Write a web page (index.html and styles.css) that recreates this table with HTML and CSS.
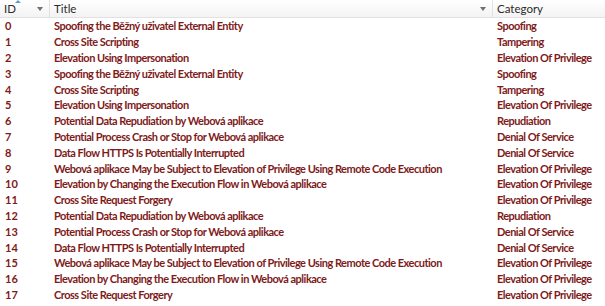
FILE: index.html
```html
<!DOCTYPE html>
<html lang="en">
<head>
  <meta charset="UTF-8" />
  <title>Threat List</title>
  <link rel="stylesheet" href="styles.css">
</head>
<body>
  <div class="grid">
    <div class="head">
      <div class="hcell id-col">
        <span class="sort-arrow"></span>
        ID
        <span class="filter-arrow"></span>
      </div>
      <div class="hcell title-col">
        Title
        <span class="filter-arrow"></span>
      </div>
      <div class="hcell cat-col">Category</div>
    </div>

    <div class="rows" id="rows"></div>
  </div>

  <script>
    const threats = [
      ["0", "Spoofing the Běžný uživatel External Entity", "Spoofing"],
      ["1", "Cross Site Scripting", "Tampering"],
      ["2", "Elevation Using Impersonation", "Elevation Of Privilege"],
      ["3", "Spoofing the Běžný uživatel External Entity", "Spoofing"],
      ["4", "Cross Site Scripting", "Tampering"],
      ["5", "Elevation Using Impersonation", "Elevation Of Privilege"],
      ["6", "Potential Data Repudiation by Webová aplikace", "Repudiation"],
      ["7", "Potential Process Crash or Stop for Webová aplikace", "Denial Of Service"],
      ["8", "Data Flow HTTPS Is Potentially Interrupted", "Denial Of Service"],
      ["9", "Webová aplikace May be Subject to Elevation of Privilege Using Remote Code Execution", "Elevation Of Privilege"],
      ["10", "Elevation by Changing the Execution Flow in Webová aplikace", "Elevation Of Privilege"],
      ["11", "Cross Site Request Forgery", "Elevation Of Privilege"],
      ["12", "Potential Data Repudiation by Webová aplikace", "Repudiation"],
      ["13", "Potential Process Crash or Stop for Webová aplikace", "Denial Of Service"],
      ["14", "Data Flow HTTPS Is Potentially Interrupted", "Denial Of Service"],
      ["15", "Webová aplikace May be Subject to Elevation of Privilege Using Remote Code Execution", "Elevation Of Privilege"],
      ["16", "Elevation by Changing the Execution Flow in Webová aplikace", "Elevation Of Privilege"],
      ["17", "Cross Site Request Forgery", "Elevation Of Privilege"]
    ];

    const rows = document.getElementById('rows');
    threats.forEach(t => {
      const row = document.createElement('div');
      row.className = 'row';
      row.innerHTML =
        '<div class="cell id-col">' + t[0] + '</div>' +
        '<div class="cell title-col">' + t[1] + '</div>' +
        '<div class="cell cat-col">' + t[2] + '</div>';
      rows.appendChild(row);
    });
  </script>
</body>
</html>
```

FILE: styles.css
```css
body {
  margin: 0;
  background: #ffffff;
  font-family: 'Lato', 'Open Sans', sans-serif;
  overflow: hidden;
}

.grid {
  width: 605px;
}

.head,
.row {
  display: grid;
  grid-template-columns: 50px 443px 1fr;
}

.head {
  height: 17px;
  background: linear-gradient(to bottom, #ffffff, #f3f3f3);
  border-bottom: 1px solid #e2e2e2;
  color: #2b2b2b;
  font-size: 11.5px;
}

.hcell {
  position: relative;
  display: flex;
  align-items: center;
  padding-left: 4px;
  border-right: 1px solid #e2e2e2;
}

.hcell.cat-col {
  border-right: none;
}

.sort-arrow {
  position: absolute;
  left: 15px;
  top: 0;
  width: 0;
  height: 0;
  border-left: 3px solid transparent;
  border-right: 3px solid transparent;
  border-bottom: 3px solid #5b9bd5;
}

.filter-arrow {
  position: absolute;
  right: 6px;
  top: 7px;
  width: 0;
  height: 0;
  border-left: 3px solid transparent;
  border-right: 3px solid transparent;
  border-top: 4px solid #707070;
}

.row {
  height: 15.8px;
  color: #7e1a1a;
  font-size: 11px;
  font-weight: 700;
  letter-spacing: -0.5px;
}

.cell {
  display: flex;
  align-items: center;
  white-space: nowrap;
  padding-left: 4px;
}

.cell.id-col {
  padding-left: 5px;
  letter-spacing: 0;
}
```
